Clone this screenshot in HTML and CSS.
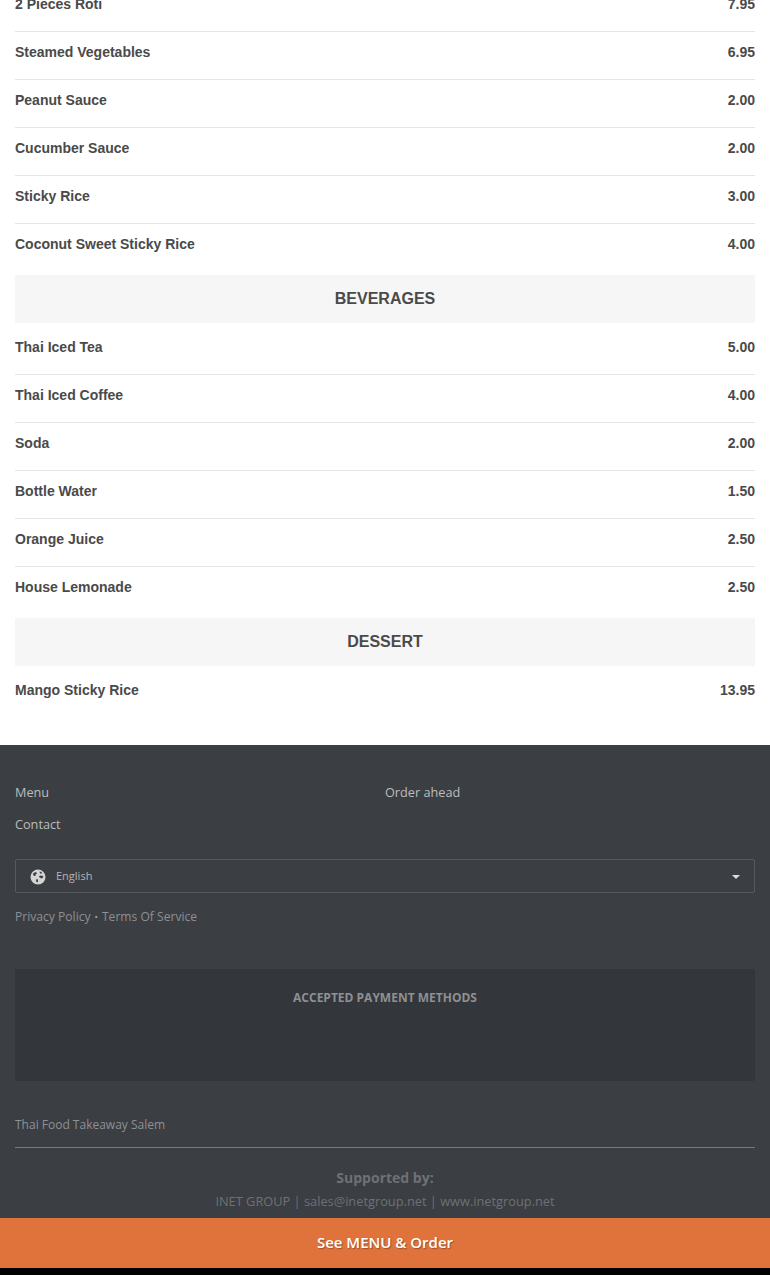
FILE: index.html
```html
<!DOCTYPE html>
<html lang="en">
<head>
    <meta charset="UTF-8">
    <meta name="viewport" content="width=device-width, initial-scale=1.0">
    <title>Thai Food Takeaway Salem</title>
    <link rel="stylesheet" href="styles.css">
</head>
<body>

<div class="menu">
    <div class="menu-row"><span>2 Pieces Roti</span><span>7.95</span></div>
    <div class="menu-row"><span>Steamed Vegetables</span><span>6.95</span></div>
    <div class="menu-row"><span>Peanut Sauce</span><span>2.00</span></div>
    <div class="menu-row"><span>Cucumber Sauce</span><span>2.00</span></div>
    <div class="menu-row"><span>Sticky Rice</span><span>3.00</span></div>
    <div class="menu-row"><span>Coconut Sweet Sticky Rice</span><span>4.00</span></div>

    <h2 class="menu-heading">BEVERAGES</h2>
    <div class="menu-row"><span>Thai Iced Tea</span><span>5.00</span></div>
    <div class="menu-row"><span>Thai Iced Coffee</span><span>4.00</span></div>
    <div class="menu-row"><span>Soda</span><span>2.00</span></div>
    <div class="menu-row"><span>Bottle Water</span><span>1.50</span></div>
    <div class="menu-row"><span>Orange Juice</span><span>2.50</span></div>
    <div class="menu-row"><span>House Lemonade</span><span>2.50</span></div>

    <h2 class="menu-heading">DESSERT</h2>
    <div class="menu-row"><span>Mango Sticky Rice</span><span>13.95</span></div>
</div>

<div class="footer">
    <div class="footer-links">
        <a href="#">Menu</a>
        <a href="#">Order ahead</a>
        <a href="#">Contact</a>
    </div>

    <div class="language">
        <svg class="globe" width="16" height="16" viewBox="0 0 16 16">
            <circle cx="8" cy="8" r="7.5" fill="#d4d4d4"/>
            <path d="M3.5 4 L6 3 L7 4.5 L5.5 5.5 L5.5 7 L4 7 L3 5.5 Z" fill="#3b3e43"/>
            <path d="M9.5 2.5 L11.5 3 L12 4.5 L10 4.5 Z" fill="#3b3e43"/>
            <path d="M9 7 L11.5 6.5 L13.5 7.5 L12 9.5 L10.5 9 L9.5 8.5 Z" fill="#3b3e43"/>
            <path d="M6.5 10 L8 10.5 L8 12.5 L7 13.5 L6 12 Z" fill="#3b3e43"/>
        </svg>
        <span class="language-name">English</span>
        <span class="caret"></span>
    </div>

    <div class="legal">
        <a href="#">Privacy Policy</a>
        <span class="dot">&bull;</span>
        <a href="#">Terms Of Service</a>
    </div>

    <div class="payment">
        <h3>ACCEPTED PAYMENT METHODS</h3>
    </div>

    <div class="restaurant">Thai Food Takeaway Salem</div>

    <div class="support">
        <strong>Supported by:</strong>
        <p>INET GROUP | sales@inetgroup.net | www.inetgroup.net</p>
    </div>
</div>

<a class="order-bar" href="#">See MENU &amp; Order</a>
<div class="bottom-strip"></div>

</body>
</html>
```
FILE: styles.css
```css
body {
    font-family: "Open Sans", sans-serif;
    background-color: #fff;
    margin: 0;
    padding: 0;
    overflow: hidden;
}
a {
    color: inherit;
    text-decoration: none;
}
.menu {
    margin-top: -16px;
    padding: 0 15px 27px;
    font-family: "Liberation Sans", Arial, sans-serif;
}
.menu-row {
    display: flex;
    justify-content: space-between;
    height: 35px;
    padding-top: 12px;
    border-bottom: 1px solid #e5e5e5;
    font-size: 14px;
    font-weight: bold;
    line-height: 16px;
    color: #4a4a4a;
}
.menu-row:last-child,
.menu-row:has(+ .menu-heading) {
    border-bottom-color: transparent;
}
.menu-heading {
    margin: 3px 0 4px;
    height: 48px;
    background-color: #f6f6f6;
    font-size: 16px;
    font-weight: bold;
    line-height: 47px;
    text-align: center;
    color: #4a4a4a;
}
.footer {
    background-color: #3b3e42;
    padding: 38px 15px 0;
    height: 473px;
    box-sizing: border-box;
    color: #bdbdbd;
}
.footer-links {
    display: grid;
    grid-template-columns: 1fr 1fr;
    row-gap: 14px;
    font-size: 12.7px;
    line-height: 18px;
}
.language {
    display: flex;
    align-items: center;
    height: 32px;
    margin-top: 26px;
    padding: 0 14px;
    border: 1px solid #56595e;
    border-radius: 2px;
    font-size: 11px;
    color: #b4b4b4;
}
.globe {
    margin: 2px 10px 0 0;
}
.language-name {
    flex: 1;
    padding-bottom: 2px;
}
.caret {
    width: 0;
    height: 0;
    margin-top: 2px;
    border-left: 4px solid transparent;
    border-right: 4px solid transparent;
    border-top: 4px solid #ddd;
}
.legal {
    display: flex;
    align-items: center;
    gap: 4px;
    margin-top: 15px;
    font-size: 12.1px;
    line-height: 17px;
    color: #8e9094;
}
.dot {
    font-size: 9px;
    color: #a5a7aa;
}
.payment {
    height: 112px;
    margin-top: 44px;
    padding-top: 20px;
    box-sizing: border-box;
    background-color: #33363a;
    border-radius: 2px;
}
.payment h3 {
    margin: 0;
    font-size: 12px;
    font-weight: bold;
    line-height: 17px;
    text-align: center;
    color: #8e9094;
}
.restaurant {
    margin-top: 35px;
    padding-bottom: 14px;
    border-bottom: 1px solid #77797d;
    font-size: 12px;
    line-height: 17px;
    color: #8e9094;
}
.support {
    margin-top: 20px;
    text-align: center;
    color: #6e7175;
}
.support strong {
    display: block;
    font-size: 14px;
    line-height: 20px;
}
.support p {
    margin: 4px 0 0;
    font-size: 12.8px;
    line-height: 18px;
}
.order-bar {
    display: block;
    height: 50px;
    background-color: #df733b;
    font-size: 15px;
    font-weight: 600;
    line-height: 49px;
    text-align: center;
    color: #fff;
    text-shadow: 1px 1px 1px rgba(0, 0, 0, 0.3);
}
.bottom-strip {
    height: 7px;
    background-color: #000;
}
```
